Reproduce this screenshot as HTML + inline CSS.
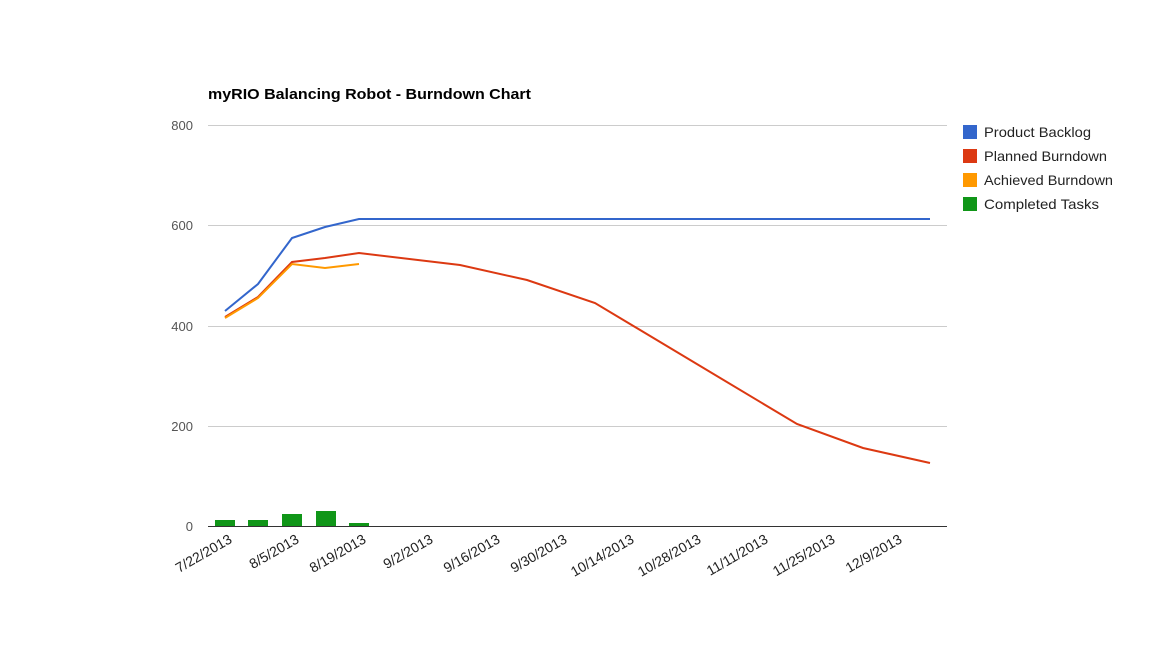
<!DOCTYPE html>
<html><head><meta charset="utf-8"><style>
html,body{margin:0;padding:0;background:#fff;}
svg{display:block;font-family:"Liberation Sans",Arial,sans-serif;}
</style></head><body>
<svg width="1155" height="651" viewBox="0 0 1155 651">
<rect width="1155" height="651" fill="#fff"/>
<text x="208" y="99" font-size="15" font-weight="bold" fill="#000" textLength="323" lengthAdjust="spacingAndGlyphs">myRIO Balancing Robot - Burndown Chart</text>
<g stroke="#ccc" stroke-width="1">
<line x1="208" y1="125.5" x2="947" y2="125.5"/>
<line x1="208" y1="225.5" x2="947" y2="225.5"/>
<line x1="208" y1="326.5" x2="947" y2="326.5"/>
<line x1="208" y1="426.5" x2="947" y2="426.5"/>
</g>
<g font-size="13" fill="#555" text-anchor="end">
<text x="193" y="130">800</text>
<text x="193" y="230">600</text>
<text x="193" y="331">400</text>
<text x="193" y="431">200</text>
<text x="193" y="531">0</text>
</g>
<g fill="#109618">
<rect x="215" y="520" width="20" height="6"/>
<rect x="248" y="520" width="20" height="6"/>
<rect x="282" y="514" width="20" height="12"/>
<rect x="316" y="511" width="20" height="15"/>
<rect x="349" y="523" width="20" height="3"/>
</g>
<line x1="208" y1="526.5" x2="947" y2="526.5" stroke="#333" stroke-width="1"/>
<polyline fill="none" stroke="#3366cc" stroke-width="2" points="225,311 258,284 292,238 325,227 359,219 930,219"/>
<polyline fill="none" stroke="#dc3912" stroke-width="2" points="225,317 258,297 292,262 325,258 359,253 460,265 527,280 595,303 797,424 863,448 930,463"/>
<polyline fill="none" stroke="#ff9900" stroke-width="2" points="225,318 258,298 292,264 325,268 359,264"/>
<g font-size="14" fill="#222" text-anchor="end">
<text transform="translate(233,542) rotate(-30)">7/22/2013</text>
<text transform="translate(300,542) rotate(-30)">8/5/2013</text>
<text transform="translate(367,542) rotate(-30)">8/19/2013</text>
<text transform="translate(434,542) rotate(-30)">9/2/2013</text>
<text transform="translate(501,542) rotate(-30)">9/16/2013</text>
<text transform="translate(568,542) rotate(-30)">9/30/2013</text>
<text transform="translate(635,542) rotate(-30)">10/14/2013</text>
<text transform="translate(702,542) rotate(-30)">10/28/2013</text>
<text transform="translate(769,542) rotate(-30)">11/11/2013</text>
<text transform="translate(836,542) rotate(-30)">11/25/2013</text>
<text transform="translate(903,542) rotate(-30)">12/9/2013</text>
</g>
<rect x="963" y="125" width="14" height="14" fill="#3366cc"/>
<rect x="963" y="149" width="14" height="14" fill="#dc3912"/>
<rect x="963" y="173" width="14" height="14" fill="#ff9900"/>
<rect x="963" y="197" width="14" height="14" fill="#109618"/>
<g font-size="14" fill="#222">
<text x="984" y="137" textLength="107" lengthAdjust="spacingAndGlyphs">Product Backlog</text>
<text x="984" y="161" textLength="123" lengthAdjust="spacingAndGlyphs">Planned Burndown</text>
<text x="984" y="185" textLength="129" lengthAdjust="spacingAndGlyphs">Achieved Burndown</text>
<text x="984" y="209" textLength="115" lengthAdjust="spacingAndGlyphs">Completed Tasks</text>
</g>
</svg>
</body></html>
